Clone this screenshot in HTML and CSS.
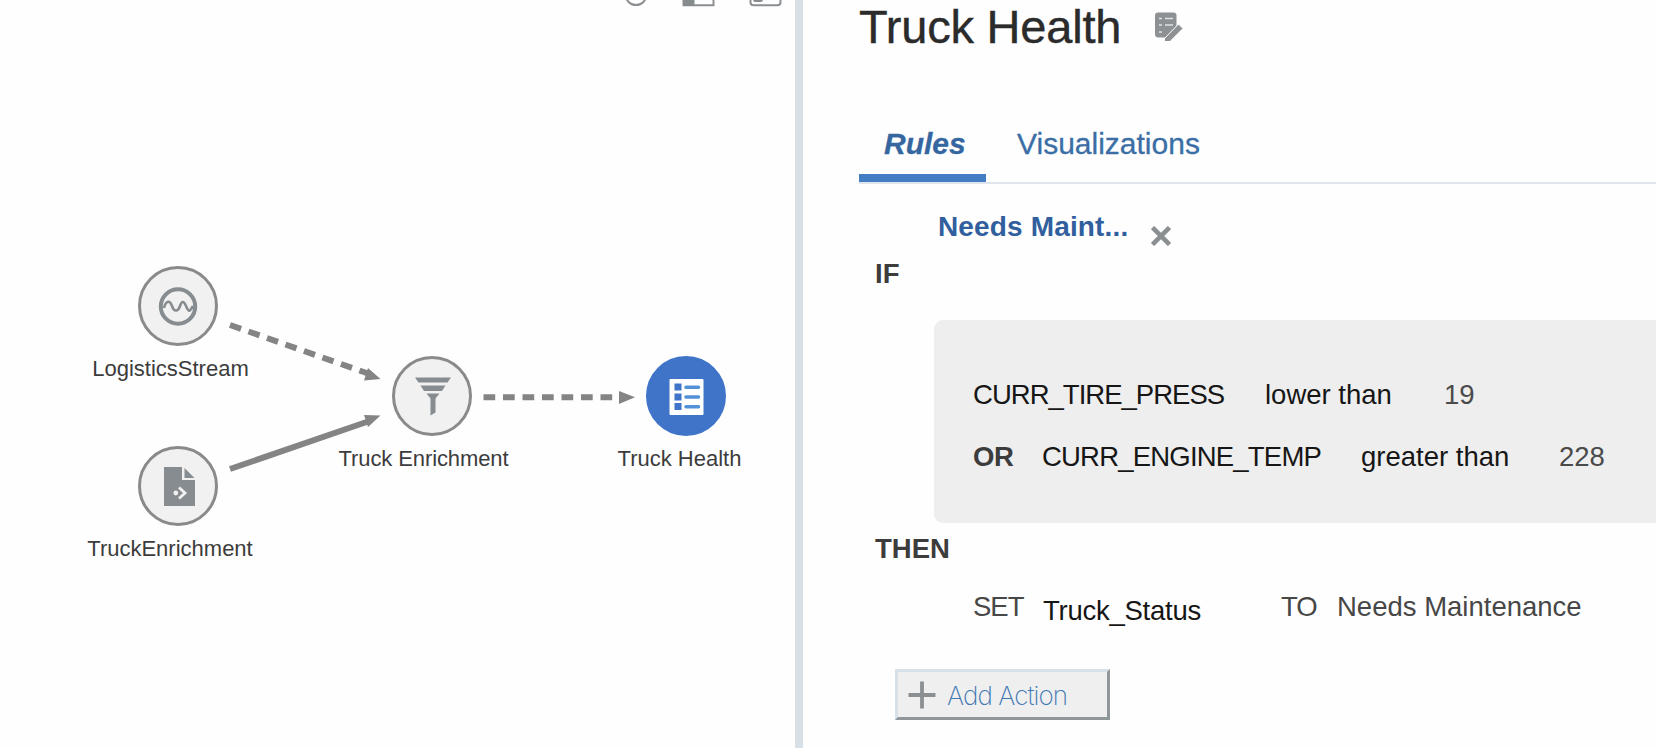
FILE: index.html
```html
<!DOCTYPE html>
<html lang="en">
<head>
<meta charset="utf-8">
<title>Truck Health</title>
<link rel="stylesheet" href="styles.css">
</head>
<body>
<main class="app">
  <section class="canvas">
    <svg class="toolbar" width="200" height="8" viewBox="0 0 200 8" fill="none" stroke="#8b8f92" stroke-width="2">
      <circle cx="41" cy="-5.500" r="10.500"/>
      <path d="M88.500 -20H118.500V5.300H88.500Z"/>
      <path d="M88 -20H99.500V6H88Z" fill="#868b8e" stroke="none"/>
      <rect x="155.500" y="-20" width="30" height="25.300" rx="3"/>
      <rect x="158" y="-10" width="10" height="12" rx="2.500" fill="#868b8e" stroke="none"/>
    </svg>
    <svg class="edges" width="795" height="748" viewBox="0 0 795 748" fill="none" stroke="#848484" stroke-width="6">
      <path d="M230 325L368 373.500" stroke-dasharray="11.700 7.900"/>
      <path d="M230 469L368 421.500"/>
      <path d="M483.500 397.300H620" stroke-dasharray="11.700 7.800"/>
      <g fill="#848484" stroke="none">
        <path d="M380.500 379L364 380.500L368 368Z"/>
        <path d="M380.500 415.500L368 427L364 415Z"/>
        <path d="M635 397.300L619 404V391Z"/>
      </g>
    </svg>
    <div class="node node-stream">
      <div class="disc"><svg width="40" height="40" viewBox="0 0 40 40" fill="none" stroke="#868c90">
        <circle cx="20" cy="20.500" r="17.200" stroke-width="4"/>
        <path d="M6 22C8 14 12 14 14 20S20 26 22 20S26 15 28.500 21S32 25 35 20" stroke-width="2.600"/>
      </svg></div>
      <span>LogisticsStream</span>
    </div>
    <div class="node node-file">
      <div class="disc"><svg width="40" height="40" viewBox="0 0 40 40">
        <path d="M6 1H24V14H37V40H6Z" fill="#868c90"/>
        <path d="M26.500 2L36.500 12H26.500Z" fill="#868c90"/>
        <path d="M21 21.500L27 27L21 32.500" fill="none" stroke="#f1f1f1" stroke-width="2.800"/>
        <circle cx="17.800" cy="27" r="2.400" fill="#f1f1f1"/>
      </svg></div>
      <span>TruckEnrichment</span>
    </div>
    <div class="node node-query">
      <div class="disc"><svg width="40" height="40" viewBox="0 0 40 40" fill="#868c90">
        <path d="M3 1.500H39L35.500 6.500H6.500Z"/>
        <path d="M8.500 9.500H33.500L30 15H12Z"/>
        <path d="M14.500 17.500H27.500L23.500 22.500V36.500L18.500 39.500V22.500Z"/>
      </svg></div>
      <span>Truck Enrichment</span>
    </div>
    <div class="node node-rule">
      <div class="disc disc-active"><svg width="40" height="40" viewBox="0 0 40 40">
        <rect x="3.500" y="3" width="34" height="36" rx="1" fill="#fff"/>
        <path d="M8.500 7.500h7v7h-7zM8.500 17.500h7v7h-7zM8.500 27h7v7h-7z" fill="#3f74c8"/>
        <path d="M20 11.300H32.500M20 21H32.500M20 30.800H32.500" stroke="#5291d8" stroke-width="3.600" stroke-linecap="round"/>
      </svg></div>
      <span>Truck Health</span>
    </div>
  </section>

  <section class="panel">
    <header class="title">
      <h1>Truck Health</h1>
      <svg width="30" height="32" viewBox="0 0 30 32">
        <path d="M3 1.500H18.500Q21.500 1.500 21.500 4.500V16L12 26.500H3.500Q0 26.500 0 23V4.500Q0 1.500 3 1.500Z" fill="#8d9194"/>
        <path d="M4 7.500H7M10 7.500H18M4 14H7M10 14H18M4 21H7" stroke="#dfe1e2" stroke-width="1.600"/>
        <path d="M9.500 27.500L23.500 13L28 17.500L15 30.500H9.500Z" fill="#8d9194" stroke="#fff" stroke-width="1"/>
      </svg>
    </header>
    <nav class="tabs">
      <a class="tab tab-active">Rules</a>
      <a class="tab">Visualizations</a>
    </nav>
    <div class="rule-name">
      <b>Needs Maint...</b>
      <svg width="20" height="20" viewBox="0 0 20 20" stroke="#8b8f92" stroke-width="4.600"><path d="M1.500 1.500L18.500 18.500M18.500 1.500L1.500 18.500"/></svg>
    </div>
    <b class="keyword">IF</b>
    <div class="conditions">
      <div class="cond cond-first">
        <span class="field">CURR_TIRE_PRESS</span><span>lower than</span><span class="value">19</span>
      </div>
      <div class="cond cond-or">
        <b>OR</b><span class="field">CURR_ENGINE_TEMP</span><span>greater than</span><span class="value">228</span>
      </div>
    </div>
    <b class="keyword">THEN</b>
    <div class="action">
      <span class="set">SET</span><span class="target">Truck_Status</span><span class="to">TO</span><span>Needs Maintenance</span>
    </div>
    <button class="add" type="button">
      <svg width="28" height="28" viewBox="0 0 28 28" stroke="#8b8f92" stroke-width="3.800"><path d="M14 0.500V27.500M0.500 14H27.500"/></svg>
      <span>Add Action</span>
    </button>
  </section>
</main>
</body>
</html>
```

FILE: styles.css
```css
* { box-sizing: border-box; }
body {
  margin: 0;
  background: #fefefe;
  font-family: "Liberation Sans", Arial, sans-serif;
  color: #3c3c3c;
}
svg { display: block; flex: none; }
.app {
  display: grid;
  grid-template-columns: 803px 1fr;
  width: 1656px;
  height: 748px;
  overflow: hidden;
}

/* Pipeline canvas */
.canvas {
  position: relative;
  border-right: 8px solid #d8dfe5;
}
.toolbar { margin-left: 595px; }
.edges { position: absolute; left: 0; top: 0; }
.node {
  position: absolute;
  width: 200px;
  display: flex;
  flex-direction: column;
  align-items: center;
  gap: 10px;
  font-size: 22px;
  line-height: 26px;
  white-space: nowrap;
}
.disc {
  width: 80px;
  height: 80px;
  display: grid;
  place-items: center;
  border: 3px solid #8a8a8a;
  border-radius: 50%;
  background: #f1f1f1;
}
.disc-active { background: #3f74c8; border-color: #3f74c8; }
.node-stream { left: 78px; top: 266px; }
.node-stream span { margin-left: -15px; }
.node-file { left: 78px; top: 446px; }
.node-file span { margin-left: -16px; }
.node-query { left: 332px; top: 356px; }
.node-query span { margin-left: -17px; letter-spacing: -0.1px; }
.node-rule { left: 586px; top: 356px; }
.node-rule span { margin-left: -13px; }

/* Rule panel */
.panel {
  display: flex;
  flex-direction: column;
  align-items: flex-start;
  padding-left: 56px;
  font-size: 27.5px;
  line-height: 30px;
  white-space: nowrap;
}
.title { display: flex; gap: 33px; }
.title h1 {
  width: 263px;
  margin: 0;
  font-size: 47px;
  line-height: 54px;
  font-weight: 400;
  letter-spacing: -0.2px;
  color: #2b2b2b;
  -webkit-text-stroke: 0.4px #2b2b2b;
}
.title svg { margin-top: 11px; }
.tabs {
  align-self: stretch;
  display: flex;
  height: 57px;
  margin-top: 73px;
  border-bottom: 2px solid #dfe5eb;
  font-size: 30px;
  line-height: 34px;
  color: #3a6ea5;
  -webkit-text-stroke: 0.3px #3a6ea5;
}
.tab { height: 55px; padding-left: 31px; }
.tab-active {
  width: 127px;
  padding-left: 25px;
  border-bottom: 8px solid #437dc4;
  font-weight: 700;
  font-style: italic;
  color: #3566a0;
}
.rule-name {
  display: flex;
  gap: 20px;
  margin: 28px 0 0 79px;
  color: #315f9e;
}
.rule-name b { width: 193px; font-size: 28px; letter-spacing: 0.15px; }
.rule-name svg { margin-top: 14px; }
.keyword { margin-left: 16px; }
.rule-name + .keyword { margin-top: 13px; }
.conditions {
  align-self: stretch;
  display: grid;
  gap: 32px;
  align-content: start;
  height: 203px;
  margin: 31px 0 11px 75px;
  padding: 60px 0 0 39px;
  border-radius: 9px 0 0 9px;
  background: #eee;
  color: #161616;
}
.cond { display: grid; }
.cond-first { grid-template-columns: 292px 179px auto; }
.cond-or { grid-template-columns: 69px 319px 198px auto; }
.cond b { color: #3c3c3c; letter-spacing: -0.5px; }
.field { letter-spacing: -0.8px; }
.cond-first .field { letter-spacing: -0.98px; }
.value { color: #4a4a4a; }
.action {
  display: grid;
  grid-template-columns: 70px 238px 56px auto;
  margin: 28px 0 0 114px;
  color: #474747;
}
.set { letter-spacing: -1px; }
.target { padding-top: 4px; color: #161616; letter-spacing: -0.25px; }
.to { letter-spacing: -1px; }
.add {
  display: flex;
  align-items: center;
  gap: 11px;
  width: 215px;
  height: 51px;
  margin: 43px 0 0 36px;
  padding: 0 0 0 10px;
  border: 3px solid;
  border-color: #d8e1e7 #8f979b #8f979b #d8e1e7;
  background: #efefef;
  font: 200 26px/30px Inter, "Liberation Sans", sans-serif;
  letter-spacing: -0.9px;
  color: #3f78b3;
}
.add span { padding-top: 2px; }
```
